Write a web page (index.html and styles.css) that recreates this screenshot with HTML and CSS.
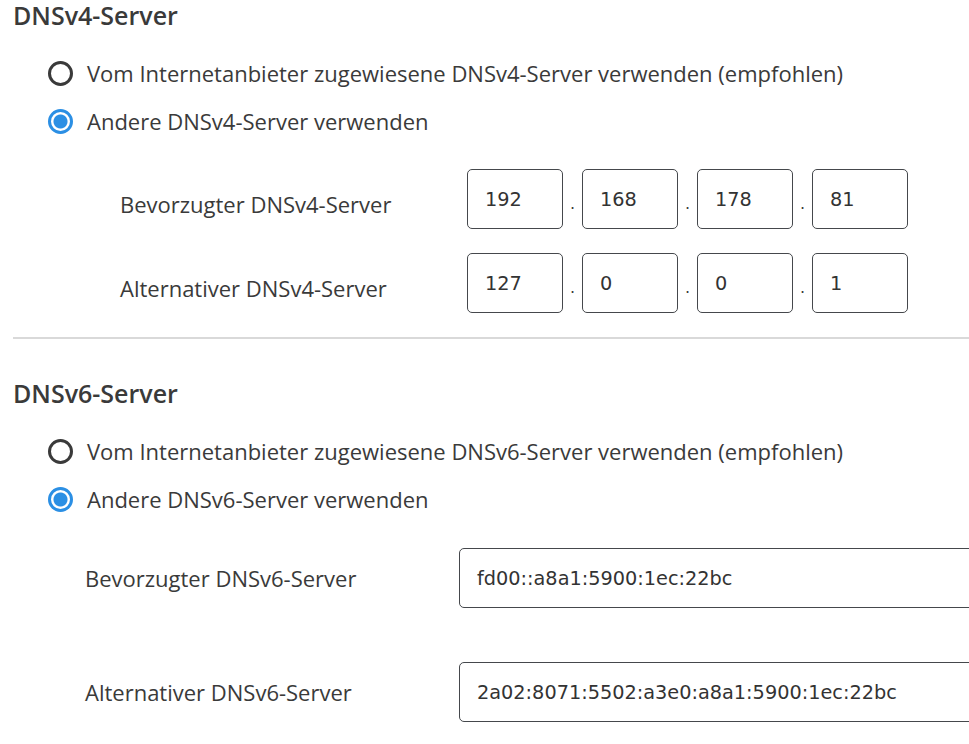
FILE: index.html
```html
<!DOCTYPE html>
<html lang="de">
<head>
    <meta charset="UTF-8">
    <meta name="viewport" content="width=device-width, initial-scale=1.0">
    <title>DNS-Server</title>
    <link rel="stylesheet" href="styles.css">
</head>
<body>
    <main class="page">
        <section class="dns-section">
            <h2>DNSv4-Server</h2>
            <div class="radio-list">
                <label class="radio-row">
                    <span class="radio"></span>
                    Vom Internetanbieter zugewiesene DNSv4-Server verwenden (empfohlen)
                </label>
                <label class="radio-row">
                    <span class="radio checked"></span>
                    Andere DNSv4-Server verwenden
                </label>
            </div>
            <div class="ip-rows v4">
                <div class="ip-row">
                    <span class="ip-label">Bevorzugter DNSv4-Server</span>
                    <div class="octets">
                        <div class="field octet">192</div><span class="dot">.</span>
                        <div class="field octet">168</div><span class="dot">.</span>
                        <div class="field octet">178</div><span class="dot">.</span>
                        <div class="field octet">81</div>
                    </div>
                </div>
                <div class="ip-row">
                    <span class="ip-label">Alternativer DNSv4-Server</span>
                    <div class="octets">
                        <div class="field octet">127</div><span class="dot">.</span>
                        <div class="field octet">0</div><span class="dot">.</span>
                        <div class="field octet">0</div><span class="dot">.</span>
                        <div class="field octet">1</div>
                    </div>
                </div>
            </div>
        </section>

        <hr class="divider">

        <section class="dns-section">
            <h2>DNSv6-Server</h2>
            <div class="radio-list">
                <label class="radio-row">
                    <span class="radio"></span>
                    Vom Internetanbieter zugewiesene DNSv6-Server verwenden (empfohlen)
                </label>
                <label class="radio-row">
                    <span class="radio checked"></span>
                    Andere DNSv6-Server verwenden
                </label>
            </div>
            <div class="ip-rows v6">
                <div class="ip-row">
                    <span class="ip-label">Bevorzugter DNSv6-Server</span>
                    <div class="field wide">fd00::a8a1:5900:1ec:22bc</div>
                </div>
                <div class="ip-row">
                    <span class="ip-label">Alternativer DNSv6-Server</span>
                    <div class="field wide">2a02:8071:5502:a3e0:a8a1:5900:1ec:22bc</div>
                </div>
            </div>
        </section>
    </main>
</body>
</html>
```

FILE: styles.css
```css
html, body {
    margin: 0;
    padding: 0;
    overflow: hidden;
}
body {
    font-family: "Open Sans", "Noto Sans", sans-serif;
    font-size: 22px;
    color: #3a3a3a;
    background-color: #fff;
}
.page {
    padding-left: 13px;
    overflow: hidden;
}
.dns-section h2 {
    margin: 0;
    height: 30px;
    line-height: 30px;
    font-size: 25px;
    font-weight: 600;
    color: #3a3a3a;
}
.radio-list {
    margin-top: 19px;
    padding-left: 35px;
}
.radio-row {
    display: flex;
    align-items: center;
    height: 48px;
    gap: 14px;
    white-space: nowrap;
}
.radio {
    box-sizing: border-box;
    width: 25px;
    height: 25px;
    border: 3px solid #3a3a3a;
    border-radius: 50%;
    flex-shrink: 0;
}
.radio.checked {
    border-color: #2b8fe4;
    background: radial-gradient(circle, #2b8fe4 0 6.5px, #fff 7.5px);
}
.ip-rows {
    display: flex;
    flex-direction: column;
}
.ip-rows.v4 {
    margin-top: 24px;
    gap: 24px;
}
.ip-rows.v6 {
    margin-top: 25px;
    gap: 54px;
}
.ip-row {
    display: flex;
    align-items: center;
    height: 60px;
}
.ip-label {
    box-sizing: border-box;
    flex-shrink: 0;
    white-space: nowrap;
}
.v4 .ip-label {
    padding-left: 107px;
    padding-top: 10px;
    width: 454px;
}
.v6 .ip-label {
    padding-left: 72px;
    width: 446px;
}
.octets {
    display: flex;
    align-items: center;
}
.field {
    box-sizing: border-box;
    height: 60px;
    border: 1px solid #45484c;
    border-radius: 5px;
    display: flex;
    align-items: center;
    padding-left: 17px;
    font-family: "DejaVu Sans", Verdana, sans-serif;
    font-size: 19.3px;
    color: #333;
}
.octet {
    width: 96px;
}
.dot {
    width: 19px;
    text-align: center;
    font-family: "DejaVu Sans", sans-serif;
    font-size: 16px;
    padding-top: 8px;
}
.field.wide {
    width: 520px;
    flex-shrink: 0;
}
.divider {
    margin: 24px 0 39px 0;
    border: 0;
    border-top: 2px solid #d9d9d9;
}
```
